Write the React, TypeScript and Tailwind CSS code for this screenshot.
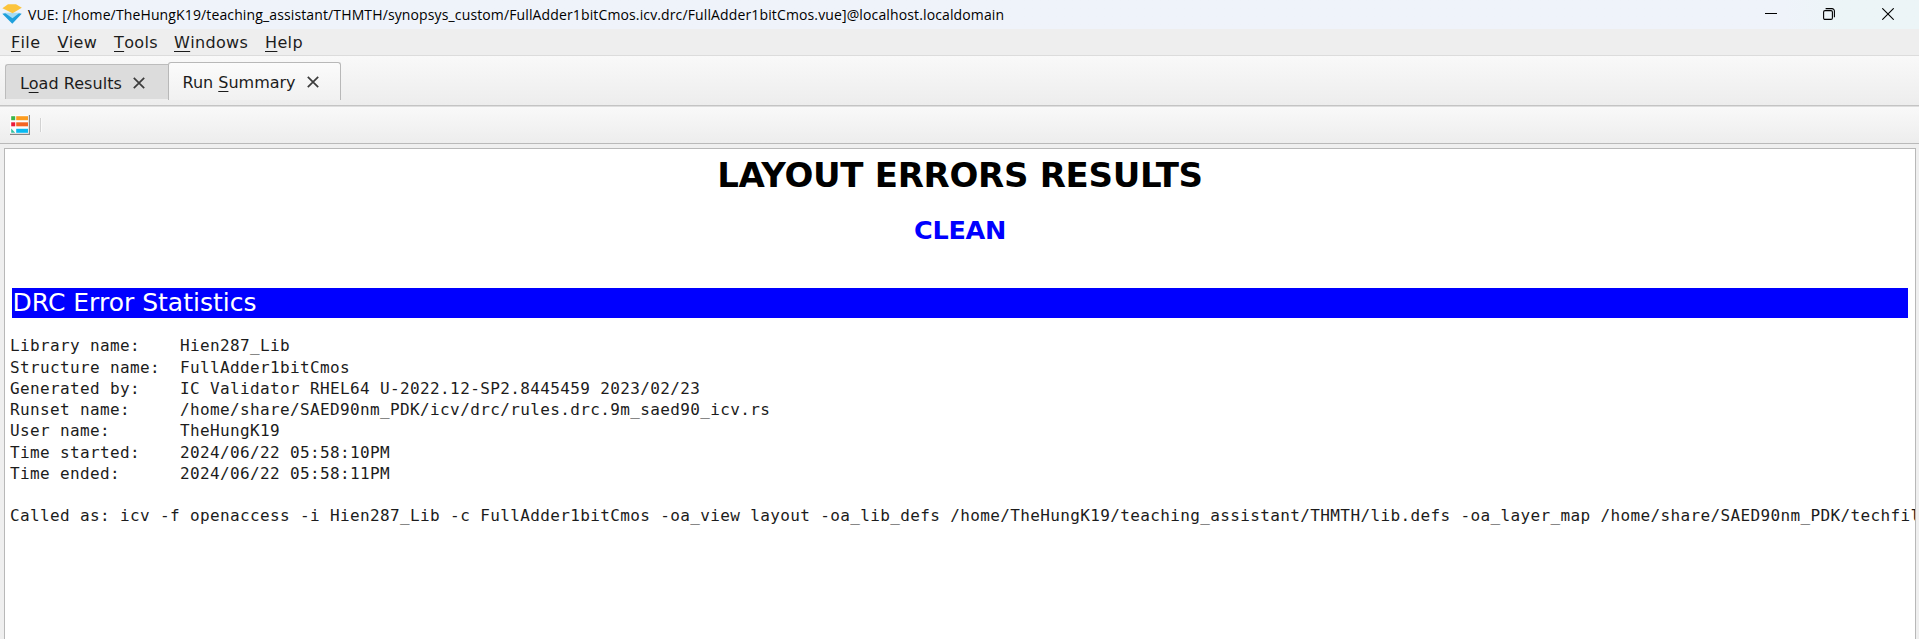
import React from "react";

const info: [string, string][] = [
  ["Library name:", "Hien287_Lib"],
  ["Structure name:", "FullAdder1bitCmos"],
  ["Generated by:", "IC Validator RHEL64 U-2022.12-SP2.8445459 2023/02/23"],
  ["Runset name:", "/home/share/SAED90nm_PDK/icv/drc/rules.drc.9m_saed90_icv.rs"],
  ["User name:", "TheHungK19"],
  ["Time started:", "2024/06/22 05:58:10PM"],
  ["Time ended:", "2024/06/22 05:58:11PM"],
];

const calledAs =
  "Called as: icv -f openaccess -i Hien287_Lib -c FullAdder1bitCmos -oa_view layout -oa_lib_defs /home/TheHungK19/teaching_assistant/THMTH/lib.defs -oa_layer_map /home/share/SAED90nm_PDK/techfil";

const report = [...info.map(([label, value]) => label.padEnd(17) + value), "", calledAs].join("\n");

function Mnemonic({ text, at }: { text: string; at: number }) {
  return (
    <>
      {text.slice(0, at)}
      <span className="underline decoration-1 underline-offset-[3px] [text-decoration-skip-ink:none]">{text[at]}</span>
      {text.slice(at + 1)}
    </>
  );
}

function Logo() {
  return (
    <svg width="20" height="20" viewBox="0 0 20 20" className="mt-[3.5px] ml-0.5 shrink-0">
      <path d="M0.3 9.8 L4 9 L10.3 12.5 L16 9 L19.7 9.8 L10.3 19.7 Z" fill="#1fa0dc" />
      <path d="M2.6 8.8 L17.6 8.8 L10.5 14.2 Z" fill="#a5dcf2" />
      <path d="M0.4 4.2 L6 0.2 L14 0.2 L19.8 3.8 L10.6 9.2 Z" fill="#fbc43d" />
    </svg>
  );
}

function ListIcon() {
  return (
    <svg width="20" height="20" viewBox="0 0 20 20" className="shrink-0">
      <rect width="19" height="19" fill="#fdfdfd" />
      <path d="M19.4 0V19.4H0" fill="none" stroke="#858585" strokeWidth="1.2" />
      <rect x="1.2" y="1.2" width="4" height="4" fill="#3db54a" />
      <rect x="6.2" y="1.2" width="11.8" height="4" fill="#fc9c1f" />
      <rect x="1.2" y="7.3" width="4" height="4" fill="#ec1c3a" />
      <rect x="6.2" y="7.3" width="11.8" height="4" fill="#f46524" />
      <path d="M1.2 13.6L5.2 17.8H1.2Z" fill="#35c0a0" />
      <rect x="6.2" y="13.8" width="11.8" height="4" fill="#09b9f0" />
    </svg>
  );
}

function CloseX() {
  return (
    <svg width="12" height="12" viewBox="0 0 12 12" className="-mt-0.5 shrink-0" fill="none" stroke="#3c3c3c" strokeWidth="1.7">
      <path d="M0.8 0.8L11.2 11.2M11.2 0.8L0.8 11.2" />
    </svg>
  );
}

export default function App() {
  return (
    <div className="flex h-[639px] w-[1919px] flex-col overflow-hidden bg-[#efefef] font-['DejaVu_Sans',sans-serif] text-base text-[#1c1c1c]">
      <header className="flex h-[29px] shrink-0 bg-linear-to-r from-[#eff3fa] from-[93%] to-[#ecf5f7] to-[96%]">
        <Logo />
        <div className="ml-[6px] grow font-['Open_Sans',sans-serif] text-[14px] leading-[29px] tracking-[0.13px] whitespace-nowrap text-black">
          VUE: [/home/TheHungK19/teaching_assistant/THMTH/synopsys_custom/FullAdder1bitCmos.icv.drc/FullAdder1bitCmos.vue]@localhost.localdomain
        </div>
        <div className="mt-2 mr-[25px] flex gap-[46px]">
          <svg width="12" height="12" viewBox="0 0 12 12" fill="none" stroke="#000">
            <path d="M0 5.5H12" />
          </svg>
          <svg width="12" height="12" viewBox="0 0 12 12" fill="none" stroke="#000" strokeWidth="1.1">
            <rect x="0.6" y="2.6" width="8.8" height="8.8" rx="1.4" />
            <path d="M2.6 0.6H9A2.4 2.4 0 0 1 11.4 3V9.3" />
          </svg>
          <svg width="12" height="12" viewBox="0 0 12 12" className="ml-px" fill="none" stroke="#000" strokeWidth="1.1">
            <path d="M0.3 0.3L11.7 11.7M11.7 0.3L0.3 11.7" />
          </svg>
        </div>
      </header>

      <nav className="flex h-[26px] shrink-0 bg-[#eeeeee] pl-[11px] leading-[28px] tracking-[0.35px] [font-kerning:none]">
        <span className="w-[46.5px]"><Mnemonic text="File" at={0} /></span>
        <span className="w-[56.5px]"><Mnemonic text="View" at={0} /></span>
        <span className="w-[60px]"><Mnemonic text="Tools" at={0} /></span>
        <span className="w-[91px]"><Mnemonic text="Windows" at={0} /></span>
        <span><Mnemonic text="Help" at={0} /></span>
      </nav>

      <div className="flex h-[51px] shrink-0 items-start border-t border-b border-t-[#dcdcdc] border-b-[#c4c4c4] bg-linear-to-b from-[#f9f9f9] to-[#ededed] pl-[5px]">
        <div className="mt-2 flex h-[35px] w-[163px] items-center rounded-tl-[3px] border-t border-l border-[#bcbcbc] bg-[#dcdcdc] pt-[3px] pl-[14px]">
          <span className="w-[113px] leading-5 tracking-[0.05px]"><Mnemonic text="Load Results" at={1} /></span>
          <CloseX />
        </div>
        <div className="mt-1.5 flex h-[38px] w-[173px] items-center rounded-t-[3px] border-x border-t border-[#b8b8b8] bg-linear-to-b from-[#fbfbfb] to-[#f1f1f1] pt-0.5 pl-[13.5px]">
          <span className="w-[124px] leading-5"><Mnemonic text="Run Summary" at={4} /></span>
          <CloseX />
        </div>
      </div>

      <div className="flex h-[38px] shrink-0 items-start border-t border-b border-t-[#dedede] border-b-[#b9b9b9] bg-linear-to-b from-[#f9f9f9] to-[#ededed] pt-2 pl-2.5">
        <ListIcon />
        <div className="mt-[3px] ml-2.5 h-[14px] w-[2px] border-l border-[#d2d2d2] bg-[#fafafa]" />
      </div>

      <main className="mt-1 mr-[3px] ml-1 flex grow flex-col overflow-hidden border-x border-t border-[#b8b8b8] bg-white">
        <h1 className="mt-[6px] text-center text-[34px] leading-10 font-bold tracking-[-0.3px] text-black">LAYOUT ERRORS RESULTS</h1>
        <h2 className="mt-5 text-center text-[25.5px] leading-[30px] font-bold tracking-[-0.3px] text-[#0000ff]">CLEAN</h2>
        <div className="mt-[43px] mr-[7.5px] ml-[7px] h-[30px] shrink-0 bg-[#0000ff] pl-[0.5px] text-[25px] leading-[30px] text-white">
          DRC Error Statistics
        </div>
        <pre className="mt-[17.4px] ml-[5px] font-['DejaVu_Sans_Mono',monospace] text-[16px] leading-[21.25px] tracking-[0.37px]">{report}</pre>
      </main>
    </div>
  );
}
